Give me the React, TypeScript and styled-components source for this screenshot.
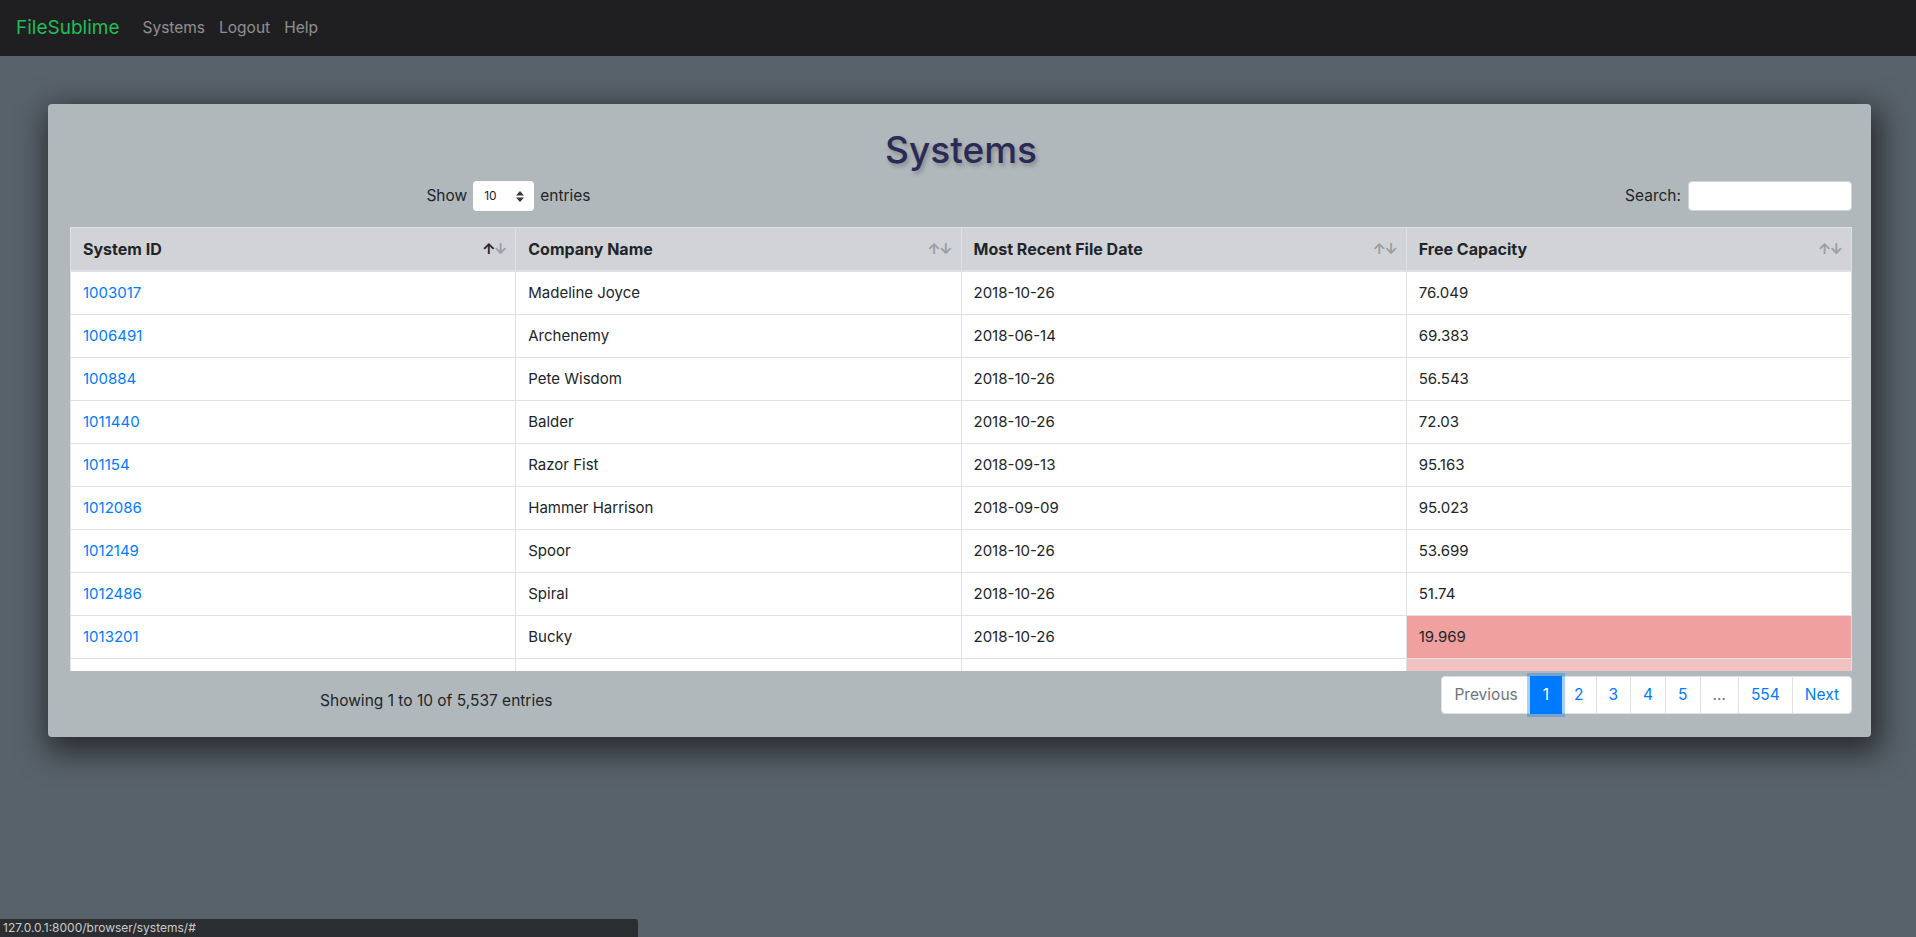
import React from 'react';
import styled, { createGlobalStyle } from 'styled-components';

const GlobalStyle = createGlobalStyle`
  html, body {
    margin: 0;
    padding: 0;
    min-height: 100vh;
    background: #58626b;
    font-family: Inter, "Noto Sans", "Liberation Sans", sans-serif;
    font-size: 16px;
    line-height: 1.5;
    color: #212529;
  }
  * {
    box-sizing: border-box;
  }
`;

type System = {
  id: string;
  company: string;
  date: string;
  capacity: string;
  level?: 'low' | 'warn';
};

const systems: System[] = [
  { id: '1003017', company: 'Madeline Joyce', date: '2018-10-26', capacity: '76.049' },
  { id: '1006491', company: 'Archenemy', date: '2018-06-14', capacity: '69.383' },
  { id: '100884', company: 'Pete Wisdom', date: '2018-10-26', capacity: '56.543' },
  { id: '1011440', company: 'Balder', date: '2018-10-26', capacity: '72.03' },
  { id: '101154', company: 'Razor Fist', date: '2018-09-13', capacity: '95.163' },
  { id: '1012086', company: 'Hammer Harrison', date: '2018-09-09', capacity: '95.023' },
  { id: '1012149', company: 'Spoor', date: '2018-10-26', capacity: '53.699' },
  { id: '1012486', company: 'Spiral', date: '2018-10-26', capacity: '51.74' },
  { id: '1013201', company: 'Bucky', date: '2018-10-26', capacity: '19.969', level: 'low' },
  { id: '1013478', company: 'Nightshade', date: '2018-10-26', capacity: '28.412', level: 'warn' },
];

const columns = ['System ID', 'Company Name', 'Most Recent File Date', 'Free Capacity'];

const Navbar = styled.nav`
  display: flex;
  align-items: center;
  height: 56px;
  padding: 0 16px;
  background: #1f1f21;
`;

const Brand = styled.a`
  font-size: 19px;
  color: #1fbd57;
  text-decoration: none;
  margin-right: 16px;
`;

const NavLink = styled.a`
  padding: 0 7px;
  color: rgba(255, 255, 255, 0.5);
  text-decoration: none;
  font-size: 15.5px;
`;

const Card = styled.section`
  margin: 48px 45px 0 48px;
  padding: 22px 19px 23px 22px;
  background: #b1b8bb;
  border-radius: 4px;
  box-shadow: 4px 10px 30px 6px rgba(0, 0, 0, 0.55);
`;

const Title = styled.h1`
  margin: 0 0 7px;
  text-align: center;
  font-size: 37px;
  font-weight: 500;
  line-height: 48px;
  color: #2b2a56;
  text-shadow: 2px 3px 4px rgba(0, 0, 0, 0.25);
`;

const Controls = styled.div`
  display: grid;
  grid-template-columns: 1fr 1fr;
  align-items: center;
  margin-bottom: 16px;
`;

const LengthControl = styled.label`
  display: flex;
  align-items: center;
  justify-content: center;
  gap: 6px;
  padding-right: 14px;
  font-size: 15.5px;
`;

const SelectBox = styled.div`
  display: flex;
  align-items: center;
  justify-content: space-between;
  width: 61px;
  height: 30px;
  padding: 0 10px 0 11px;
  background: #fff;
  border-radius: 4px;
  font-size: 12px;
`;

const SearchControl = styled.label`
  display: flex;
  align-items: center;
  justify-content: flex-end;
  gap: 7px;
  font-size: 15.5px;
`;

const SearchInput = styled.input`
  width: 164px;
  height: 30px;
  border: 1px solid #ced4da;
  border-radius: 4px;
  background: #fff;
  outline: none;
`;

const Table = styled.table`
  width: 100%;
  table-layout: fixed;
  border-collapse: collapse;
  background: #fff;
`;

const HeadCell = styled.th`
  height: 43px;
  padding: 0 10px 0 12px;
  background: #d1d3d7;
  border: 1px solid #dee2e6;
  border-bottom-width: 2px;
  text-align: left;
  font-size: 16px;
  font-weight: 700;
`;

const HeadInner = styled.div`
  display: flex;
  align-items: center;
  justify-content: space-between;
`;

const SortArrows = styled.span`
  display: flex;
  font-size: 15px;
  font-weight: 700;
  letter-spacing: -2px;
`;

const Arrow = styled.span<{ $active?: boolean }>`
  opacity: ${({ $active }) => ($active ? 1 : 0.3)};
`;

const ScrollBody = styled.div`
  height: 399px;
  overflow: hidden;
`;

const Cell = styled.td<{ $level?: 'low' | 'warn' }>`
  height: 43px;
  padding: 0 12px;
  border: 1px solid #dee2e6;
  border-top: none;
  font-size: 15px;
  background: ${({ $level }) =>
    $level === 'low' ? '#efa09f' : $level === 'warn' ? '#f2c1c1' : '#fff'};
`;

const IdLink = styled.a`
  color: #007bff;
  text-decoration: none;
`;

const Footer = styled.div`
  display: grid;
  grid-template-columns: 5fr 7fr;
  align-items: center;
  margin-top: 5px;
`;

const Info = styled.div`
  text-align: center;
  font-size: 15.5px;
  padding-top: 12px;
  padding-right: 10px;
`;

const Pagination = styled.ul`
  display: flex;
  justify-content: flex-end;
  margin: 0;
  padding: 0;
  list-style: none;
`;

const PageLink = styled.li<{ $active?: boolean; $disabled?: boolean }>`
  display: flex;
  align-items: center;
  height: 38px;
  padding: 0 12px;
  margin-left: -1px;
  border: 1px solid ${({ $active }) => ($active ? '#007bff' : '#dee2e6')};
  background: ${({ $active }) => ($active ? '#007bff' : '#fff')};
  color: ${({ $active, $disabled }) => ($active ? '#fff' : $disabled ? '#6c757d' : '#007bff')};
  font-size: 15.5px;
  position: relative;
  z-index: ${({ $active }) => ($active ? 2 : 1)};
  box-shadow: ${({ $active }) => ($active ? '0 0 0 3px rgba(0, 123, 255, 0.35)' : 'none')};

  &:first-child {
    margin-left: 0;
    border-radius: 4px 0 0 4px;
  }
  &:last-child {
    border-radius: 0 4px 4px 0;
  }
`;

const StatusBar = styled.div`
  position: fixed;
  left: 0;
  bottom: 0;
  width: 638px;
  height: 18px;
  padding: 0 3px;
  background: #2b2e31;
  border-top-right-radius: 3px;
  color: #c9cbcd;
  font-size: 12px;
  line-height: 18px;
`;

const pages = ['Previous', '1', '2', '3', '4', '5', '…', '554', 'Next'];

const ColGroup = () => (
  <colgroup>
    {columns.map((c) => (
      <col key={c} style={{ width: '25%' }} />
    ))}
  </colgroup>
);

export default function App() {
  return (
    <>
      <GlobalStyle />
      <Navbar>
        <Brand href="#">FileSublime</Brand>
        <NavLink href="#">Systems</NavLink>
        <NavLink href="#">Logout</NavLink>
        <NavLink href="#">Help</NavLink>
      </Navbar>

      <Card>
        <Title>Systems</Title>
        <Controls>
          <LengthControl>
            Show
            <SelectBox>
              <span>10</span>
              <svg width="8" height="11" viewBox="0 0 8 11">
                <path d="M4 0 L8 4.5 H0 Z M4 11 L0 6.5 H8 Z" fill="#343a40" />
              </svg>
            </SelectBox>
            entries
          </LengthControl>
          <SearchControl>
            Search:
            <SearchInput type="search" />
          </SearchControl>
        </Controls>

        <Table>
          <ColGroup />
          <thead>
            <tr>
              {columns.map((c, i) => (
                <HeadCell key={c}>
                  <HeadInner>
                    <span>{c}</span>
                    <SortArrows>
                      <Arrow $active={i === 0}>↑</Arrow>
                      <Arrow>↓</Arrow>
                    </SortArrows>
                  </HeadInner>
                </HeadCell>
              ))}
            </tr>
          </thead>
        </Table>
        <ScrollBody>
          <Table>
            <ColGroup />
            <tbody>
              {systems.map((s) => (
                <tr key={s.id}>
                  <Cell>
                    <IdLink href="#">{s.id}</IdLink>
                  </Cell>
                  <Cell>{s.company}</Cell>
                  <Cell>{s.date}</Cell>
                  <Cell $level={s.level}>{s.capacity}</Cell>
                </tr>
              ))}
            </tbody>
          </Table>
        </ScrollBody>

        <Footer>
          <Info>Showing 1 to 10 of 5,537 entries</Info>
          <Pagination>
            {pages.map((p) => (
              <PageLink key={p} $active={p === '1'} $disabled={p === 'Previous' || p === '…'}>
                {p}
              </PageLink>
            ))}
          </Pagination>
        </Footer>
      </Card>

      <StatusBar>127.0.0.1:8000/browser/systems/#</StatusBar>
    </>
  );
}
